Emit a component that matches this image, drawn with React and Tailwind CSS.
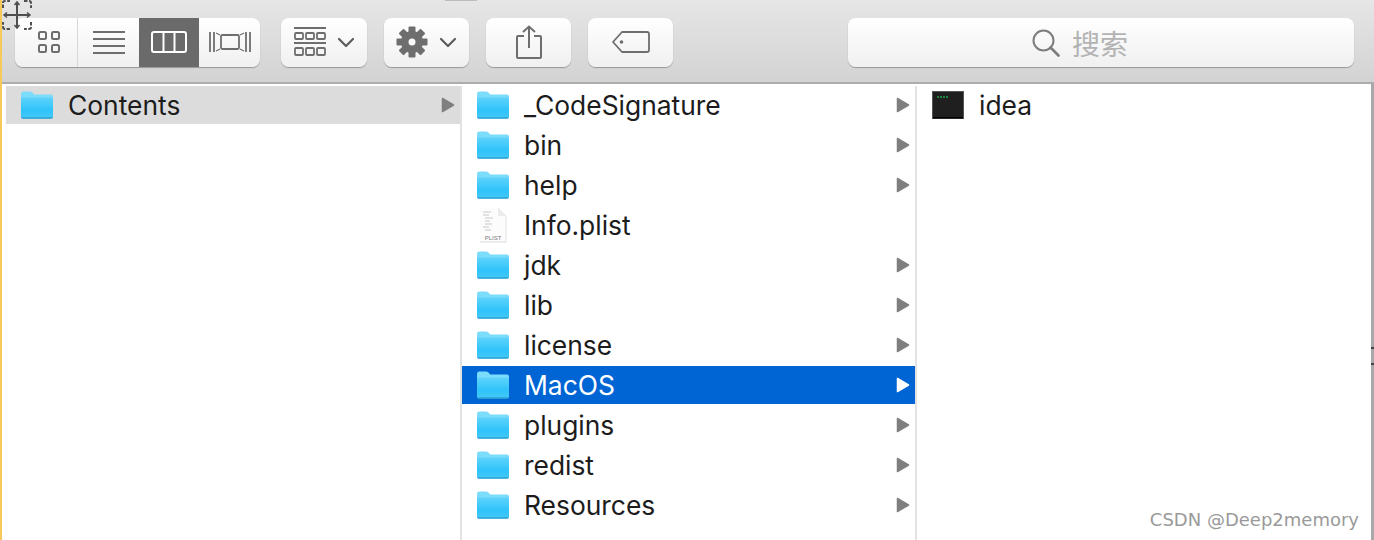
import React from 'react';

const FONT = 'font-["Inter","Liberation_Sans",sans-serif]';

const middleItems = [
    { name: '_CodeSignature', type: 'folder', arrow: true },
    { name: 'bin', type: 'folder', arrow: true },
    { name: 'help', type: 'folder', arrow: true },
    { name: 'Info.plist', type: 'file', arrow: false },
    { name: 'jdk', type: 'folder', arrow: true },
    { name: 'lib', type: 'folder', arrow: true },
    { name: 'license', type: 'folder', arrow: true },
    { name: 'MacOS', type: 'folder', arrow: true, selected: true },
    { name: 'plugins', type: 'folder', arrow: true },
    { name: 'redist', type: 'folder', arrow: true },
    { name: 'Resources', type: 'folder', arrow: true },
];

const FolderIcon = () => (
    <svg width="34" height="28" viewBox="0 0 34 28" className="shrink-0">
        <defs>
            <linearGradient id="folderBody" x1="0" y1="0" x2="0" y2="1">
                <stop offset="0" stopColor="#5fd3fb" />
                <stop offset="0.6" stopColor="#2fc3fb" />
                <stop offset="1" stopColor="#45c8f6" />
            </linearGradient>
        </defs>
        <path d="M1 3 Q1 0.5 3 0.5 H10 Q12 0.5 13 2 L14 3.5 H31 Q33 3.5 33 5.5 V25 Q33 27 31 27 H3 Q1 27 1 25 Z" fill="#7bdcfc" />
        <path d="M1 6.5 H33 V25.5 Q33 27.5 31 27.5 H3 Q1 27.5 1 25.5 Z" fill="url(#folderBody)" />
        <path d="M1 26 H33 V25.5 Q33 28 31 28 H3 Q1 28 1 25.5 Z" fill="#2a9fd0" opacity="0.7" />
    </svg>
);

const PlistIcon = () => (
    <svg width="34" height="36" viewBox="0 0 34 36" className="shrink-0">
        <path d="M4 1 H22 L30 9 V35 H4 Z" fill="#fcfcfc" />
        <path d="M22 1 L30 9 V35" fill="none" stroke="#e4e4e4" strokeWidth="1" />
        <path d="M4 35 H30" stroke="#d8d8d8" strokeWidth="1" />
        <path d="M22 1 V9 H30 Z" fill="#ececec" />
        <path d="M7 5 H15 M7 8 H13 M9 11 H17 M9 14 H14 M9 17 H16 M7 20 H13 M9 23 H15" stroke="#c8c8c8" strokeWidth="1" />
        <text x="17" y="33" textAnchor="middle" fontSize="6" fill="#777" fontFamily="Liberation Sans, sans-serif">PLIST</text>
    </svg>
);

const TerminalIcon = () => (
    <svg width="32" height="28" viewBox="0 0 32 28" className="shrink-0">
        <rect x="0.5" y="0.5" width="31" height="27" fill="#1f1f1f" stroke="#555" />
        <rect x="1" y="26" width="30" height="1.5" fill="#000" />
        <path d="M5 6 H16" stroke="#1fa84a" strokeWidth="1.5" strokeDasharray="2 1" />
    </svg>
);

const Arrow = ({ selected }) => {
    const color = selected ? '#ffffff' : '#7f7f7f';
    return (
        <svg width="14" height="16" viewBox="0 0 14 16" className="shrink-0">
            <path d="M1.5 1.5 L12.5 8 L1.5 14.5 Z" fill={color} stroke={color} strokeWidth="1.5" strokeLinejoin="round" />
        </svg>
    );
};

const Chevron = () => (
    <svg width="18" height="11" viewBox="0 0 18 11">
        <path d="M2 2 L9 9 L16 2" fill="none" stroke="#5c5c5c" strokeWidth="2.2" strokeLinecap="round" strokeLinejoin="round" />
    </svg>
);

const Label = ({ children }) => (
    <span className={`ml-[14px] flex-1 text-[26.4px] leading-[36px] ${FONT}`}>{children}</span>
);

const Row = ({ item }) => (
    <div className={`h-[38px] mb-[2px] flex items-center pl-[14px] pr-[5px] ${item.selected ? 'bg-[#0065d4] text-white' : 'text-[#1c1c1c]'}`}>
        {item.type === 'folder' ? <FolderIcon /> : <PlistIcon />}
        <Label>{item.name}</Label>
        {item.arrow && <Arrow selected={item.selected} />}
    </div>
);

const btnClass = 'h-[49px] rounded-[8px] bg-gradient-to-b from-[#ffffff] to-[#f0f0f0] shadow-[0_1px_1px_rgba(0,0,0,0.3)] flex items-center justify-center';

export default function App() {
    return (
        <div className="relative w-[1374px] h-[540px] overflow-hidden bg-white flex">
            <div className="w-[2px] bg-[#f9c85c] shrink-0" />

            <div className="flex-1 flex flex-col min-w-0">
                {/* Toolbar */}
                <div className="h-[84px] shrink-0 pt-[2px] pl-[13px] pr-[20px] flex items-center bg-gradient-to-b from-[#e7e6e7] to-[#d4d3d4] border-b-2 border-[#adadad]">
                    {/* View switcher */}
                    <div className="w-[245px] h-[49px] rounded-[8px] bg-gradient-to-b from-[#ffffff] to-[#f0f0f0] shadow-[0_1px_1px_rgba(0,0,0,0.3)] flex overflow-hidden">
                        <div className="w-[63px] pl-[5px] flex items-center justify-center border-r border-[#d8d8d8]">
                            <svg width="24" height="24" viewBox="0 0 24 24" fill="none" stroke="#6e6e6e" strokeWidth="2">
                                <rect x="2" y="2" width="7" height="7" rx="1.5" />
                                <rect x="15" y="2" width="7" height="7" rx="1.5" />
                                <rect x="2" y="15" width="7" height="7" rx="1.5" />
                                <rect x="15" y="15" width="7" height="7" rx="1.5" />
                            </svg>
                        </div>
                        <div className="w-[61px] flex items-center justify-center">
                            <svg width="32" height="24" viewBox="0 0 32 24" stroke="#6e6e6e" strokeWidth="2">
                                <path d="M0 2 H32 M0 9 H32 M0 16 H32 M0 23 H32" />
                            </svg>
                        </div>
                        <div className="w-[60px] bg-[#6b6a6b] flex items-center justify-center">
                            <svg width="36" height="22" viewBox="0 0 36 22" fill="none" stroke="#ffffff" strokeWidth="2">
                                <rect x="1" y="1" width="34" height="20" rx="2" />
                                <path d="M12.5 1 V21 M23.5 1 V21" />
                            </svg>
                        </div>
                        <div className="flex-1 flex items-center justify-center">
                            <svg width="42" height="24" viewBox="0 0 42 24" fill="none" stroke="#6e6e6e" strokeWidth="1.8">
                                <path d="M1 2 V22 M5 2 V22 M41 2 V22 M37 2 V22" />
                                <rect x="12" y="5" width="18" height="14" rx="1.5" />
                                <path d="M7 3 L11 5 M7 21 L11 19 M35 3 L31 5 M35 21 L31 19" strokeWidth="1.2" />
                            </svg>
                        </div>
                    </div>

                    {/* Arrange */}
                    <div className={`${btnClass} w-[86px] ml-[21px] gap-[11px]`}>
                        <svg width="32" height="30" viewBox="0 0 32 30" fill="none" stroke="#6e6e6e" strokeWidth="1.8">
                            <path d="M0 1 H32 M0 16 H32" />
                            <rect x="1" y="6" width="8" height="6" rx="1" />
                            <rect x="12" y="6" width="8" height="6" rx="1" />
                            <rect x="23" y="6" width="8" height="6" rx="1" />
                            <rect x="1" y="21" width="8" height="7" rx="1" />
                            <rect x="12" y="21" width="8" height="7" rx="1" />
                            <rect x="23" y="21" width="8" height="7" rx="1" />
                        </svg>
                        <Chevron />
                    </div>

                    {/* Action */}
                    <div className={`${btnClass} w-[85px] ml-[17px] gap-[11px]`}>
                        <svg width="32" height="32" viewBox="0 0 32 32">
                            <g fill="#6e6e6e">
                                <rect x="12.5" y="0.5" width="7" height="31" rx="1" />
                                <rect x="12.5" y="0.5" width="7" height="31" rx="1" transform="rotate(45 16 16)" />
                                <rect x="12.5" y="0.5" width="7" height="31" rx="1" transform="rotate(90 16 16)" />
                                <rect x="12.5" y="0.5" width="7" height="31" rx="1" transform="rotate(135 16 16)" />
                                <circle cx="16" cy="16" r="11" />
                            </g>
                            <circle cx="16" cy="16" r="3.5" fill="#f8f8f8" />
                        </svg>
                        <Chevron />
                    </div>

                    {/* Share */}
                    <div className={`${btnClass} w-[85px] ml-[17px]`}>
                        <svg width="26" height="34" viewBox="0 0 26 34" fill="none" stroke="#6e6e6e" strokeWidth="2">
                            <path d="M8 11 H2 Q1 11 1 12 V32 Q1 33 2 33 H24 Q25 33 25 32 V12 Q25 11 24 11 H18" />
                            <path d="M13 23 V1.5 M7 7 L13 1.5 L19 7" />
                        </svg>
                    </div>

                    {/* Tags */}
                    <div className={`${btnClass} w-[85px] ml-[17px]`}>
                        <svg width="38" height="22" viewBox="0 0 38 22" fill="none" stroke="#6e6e6e" strokeWidth="1.8">
                            <path d="M10 1 H35 Q37 1 37 3 V19 Q37 21 35 21 H10 L1 11 Z" strokeLinejoin="round" />
                            <circle cx="9.5" cy="11" r="1.8" fill="#6e6e6e" stroke="none" />
                        </svg>
                    </div>

                    {/* Search */}
                    <div className={`${btnClass} w-[506px] ml-[175px] gap-[12px] pr-[42px] pt-[2px]`}>
                        <svg width="28" height="28" viewBox="0 0 28 28" fill="none" stroke="#7d7d7d" strokeWidth="2">
                            <circle cx="11.5" cy="11.5" r="10" />
                            <path d="M18.5 18.5 L26.5 26.5" strokeWidth="2.6" strokeLinecap="round" />
                        </svg>
                        <span className='text-[28px] leading-none text-[#b3b3b3] font-["Noto_Sans_CJK_SC",sans-serif]'>搜索</span>
                    </div>
                </div>

                {/* Columns */}
                <div className="flex-1 flex min-h-0 pt-[2px] pr-[3px]">
                    <div className="w-[460px] pl-[4px] border-r-2 border-[#e2e2e2]">
                        <div className="h-[38px] flex items-center pl-[14px] pr-[5px] bg-[#dcdcdc] text-[#1c1c1c]">
                            <FolderIcon />
                            <Label>Contents</Label>
                            <Arrow />
                        </div>
                    </div>
                    <div className="w-[455px] border-r-2 border-[#e2e2e2]">
                        {middleItems.map((item) => (
                            <Row key={item.name} item={item} />
                        ))}
                    </div>
                    <div className="flex-1">
                        <div className="h-[38px] flex items-center pl-[15px] text-[#1c1c1c]">
                            <TerminalIcon />
                            <span className={`ml-[15px] text-[26.4px] leading-[36px] ${FONT}`}>idea</span>
                        </div>
                    </div>
                </div>
            </div>

            <div className="w-[3px] absolute right-0 top-[84px] bottom-0 bg-[#a8a8a8]" />
            <div className="w-[3px] h-[2px] absolute right-0 top-[347px] bg-[#444444]" />
            <div className="w-[3px] h-[2px] absolute right-0 top-[363px] bg-[#444444]" />

            {/* Screenshot tool cursor */}
            <svg width="32" height="30" viewBox="0 0 32 30" fill="none" className="absolute left-[1px] top-0" stroke="#4f4f4f">
                <path d="M2 8 V3 Q2 1 4 1 H9 M23 1 H28 Q30 1 30 3 V8 M30 22 V27 Q30 29 28 29 H23 M9 29 H4 Q2 29 2 27 V22" strokeWidth="2" strokeDasharray="3.5 1.5" />
                <path d="M16 2 V28 M3 15 H29" strokeWidth="2" />
                <path d="M13.5 5 L16 2 L18.5 5 M13.5 25 L16 28 L18.5 25 M6 12.5 L3 15 L6 17.5 M26 12.5 L29 15 L26 17.5" strokeWidth="1.5" />
            </svg>

            <div className="absolute left-[445px] top-0 w-[32px] h-[1px] bg-[#bdbdbd]" />

            {/* Watermark */}
            <div className='absolute right-[15px] top-[507px] text-[18px] leading-[26px] text-[#9a9a9a] font-["DejaVu_Sans",sans-serif]'>CSDN @Deep2memory</div>
        </div>
    );
}
